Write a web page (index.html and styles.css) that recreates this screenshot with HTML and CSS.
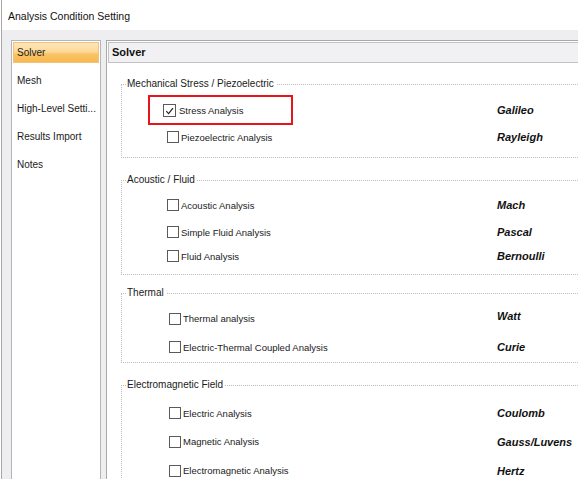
FILE: index.html
```html
<!DOCTYPE html>
<html>
<head>
<meta charset="utf-8">
<link rel="stylesheet" href="styles.css">
</head>
<body>
<div class="window">
  <div class="titlebar">Analysis Condition Setting</div>
  <div class="client">
    <nav class="menu">
      <div class="menu-item active">Solver</div>
      <div class="menu-item">Mesh</div>
      <div class="menu-item">High-Level Setti...</div>
      <div class="menu-item">Results Import</div>
      <div class="menu-item">Notes</div>
    </nav>
    <section class="panel">
      <div class="panel-header">Solver</div>
      <div class="groups">
        <fieldset class="group group--g1">
          <legend>Mechanical Stress / Piezoelectric</legend>
          <div class="row">
            <div class="cell">
              <label class="highlight"><span class="cb checked"><svg viewBox="0 0 12 12" width="12" height="12"><path d="M2.5 6.2 L5 8.8 L9.8 2.8" fill="none" stroke="#222" stroke-width="1.3"/></svg></span><span class="txt">Stress Analysis</span></label>
            </div>
            <div class="name">Galileo</div>
          </div>
          <div class="row">
            <label class="cell item"><span class="cb"></span><span class="txt">Piezoelectric Analysis</span></label>
            <div class="name">Rayleigh</div>
          </div>
        </fieldset>
        <fieldset class="group group--g2">
          <legend>Acoustic / Fluid</legend>
          <div class="row">
            <label class="cell item"><span class="cb"></span><span class="txt">Acoustic Analysis</span></label>
            <div class="name">Mach</div>
          </div>
          <div class="row row--h26">
            <label class="cell item"><span class="cb"></span><span class="txt">Simple Fluid Analysis</span></label>
            <div class="name">Pascal</div>
          </div>
          <div class="row row--h22">
            <label class="cell item"><span class="cb"></span><span class="txt">Fluid Analysis</span></label>
            <div class="name">Bernoulli</div>
          </div>
        </fieldset>
        <fieldset class="group group--g3">
          <legend>Thermal</legend>
          <div class="row row--h29">
            <label class="cell item item--wide"><span class="cb"></span><span class="txt">Thermal analysis</span></label>
            <div class="name name--up">Watt</div>
          </div>
          <div class="row">
            <label class="cell item item--wide"><span class="cb"></span><span class="txt">Electric-Thermal Coupled Analysis</span></label>
            <div class="name">Curie</div>
          </div>
        </fieldset>
        <fieldset class="group group--g4">
          <legend>Electromagnetic Field</legend>
          <div class="row">
            <label class="cell item item--wide"><span class="cb"></span><span class="txt">Electric Analysis</span></label>
            <div class="name">Coulomb</div>
          </div>
          <div class="row row--h29">
            <label class="cell item item--wide"><span class="cb"></span><span class="txt">Magnetic Analysis</span></label>
            <div class="name">Gauss/Luvens</div>
          </div>
          <div class="row row--h29">
            <label class="cell item item--wide"><span class="cb"></span><span class="txt">Electromagnetic Analysis</span></label>
            <div class="name">Hertz</div>
          </div>
        </fieldset>
      </div>
    </section>
  </div>
</div>
</body>
</html>
```

FILE: styles.css
```css
html, body {
  margin: 0;
  padding: 0;
}
body {
  width: 578px;
  height: 479px;
  overflow: hidden;
  background: #ffffff;
  font-family: "Liberation Sans", Arial, sans-serif;
  color: #1a1a1a;
}
.window {
  height: 479px;
  margin-left: 1px;
  border-left: 1px solid #a8a8a8;
  display: flex;
  flex-direction: column;
  overflow: hidden;
}
.titlebar {
  height: 30px;
  box-sizing: border-box;
  padding: 1px 0 0 6px;
  display: flex;
  align-items: center;
  font-size: 10.5px;
  color: #111;
  background: #ffffff;
}
.client {
  flex: 1;
  background: #eeedf0;
  display: flex;
  gap: 5px;
  padding: 10px 0 0 9px;
  min-height: 0;
  overflow: hidden;
}
.menu {
  width: 90px;
  box-sizing: border-box;
  border: 1px solid #b5b5b5;
  border-bottom: none;
  background: #ffffff;
  padding: 1px 1px 0 1px;
}
.menu-item {
  height: 21px;
  box-sizing: border-box;
  border: 1px solid transparent;
  margin-bottom: 7px;
  padding-left: 3px;
  font-size: 10px;
  line-height: 19px;
  color: #1a1a1a;
  white-space: nowrap;
  overflow: hidden;
}
.menu-item.active {
  border-color: #f0c27a;
  background: linear-gradient(#fde6bb 0%, #fcd999 45%, #f9c263 60%, #f7b951 100%);
}
.panel {
  flex: 1;
  min-width: 0;
  border: 1px solid #a9a9a9;
  border-right: none;
  border-bottom: none;
  background: #ffffff;
  padding: 1px 0 0 1px;
  overflow: hidden;
}
.panel-header {
  height: 21px;
  box-sizing: border-box;
  border: 1px solid #c2c2c2;
  border-right: none;
  background: #f1f0f3;
  padding-left: 3px;
  font-size: 11px;
  font-weight: bold;
  line-height: 19px;
  color: #111;
}
.groups {
  padding: 14px 0 0 13px;
}
.group {
  margin: 0;
  border: 1px dotted #bdbdbd;
  border-right: none;
  padding: 4px 0 6px 0;
  min-width: 0;
}
.group legend {
  margin-left: 4px;
  padding: 0 2px 0 1px;
  font-size: 10px;
  line-height: 14px;
  color: #1a1a1a;
}
.group--g2 {
  margin-top: 15px;
  padding-bottom: 7px;
}
.group--g3 {
  margin-top: 11px;
  padding-bottom: 1px;
}
.group--g4 {
  margin-top: 15px;
  padding-top: 7px;
}
.row {
  display: grid;
  grid-template-columns: 375px auto;
  align-items: center;
  height: 28px;
}
.row--h26 { height: 26px; }
.row--h22 { height: 22px; }
.row--h29 { height: 29px; }
.cell {
  display: flex;
  align-items: center;
}
.item {
  padding-left: 45px;
}
.item--wide {
  padding-left: 47px;
}
.highlight {
  display: flex;
  align-items: center;
  box-sizing: border-box;
  width: 145px;
  height: 30px;
  margin-left: 26px;
  padding-left: 13px;
  border: 2px solid #e8141c;
}
.cb {
  width: 12px;
  height: 12px;
  box-sizing: border-box;
  border: 1px solid #5a5a5a;
  background: #ffffff;
  margin-right: 2px;
  flex: none;
  display: flex;
}
.cb.checked {
  width: 13px;
  height: 13px;
  margin-right: 3px;
}
.cb svg {
  display: block;
}
.txt {
  font-size: 9.5px;
  color: #1a1a1a;
  white-space: nowrap;
}
.name {
  font-size: 11px;
  font-weight: bold;
  font-style: italic;
  color: #111;
  white-space: nowrap;
}
.name--up {
  position: relative;
  top: -3px;
}
```
